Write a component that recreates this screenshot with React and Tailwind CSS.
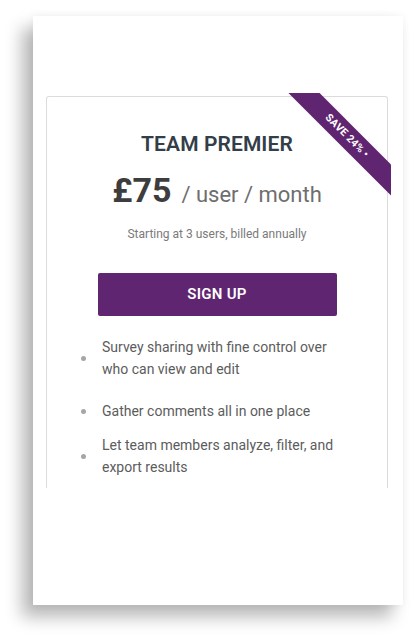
const features = [
  { text: "Survey sharing with fine control over who can view and edit", gap: "mt-[20px]" },
  { text: "Gather comments all in one place", gap: "mt-[20px]" },
  { text: "Let team members analyze, filter, and export results", gap: "mt-[12px]" },
];

const App = () => {
  return (
    <div className="min-h-[638px] bg-white pt-4 pl-[33px] font-['Roboto',_'Liberation_Sans',_sans-serif]">
      <div className="w-[370px] h-[589px] bg-white pt-20 shadow-[-11px_12px_16px_rgba(0,0,0,0.28),0_0_8px_rgba(0,0,0,0.06)]">
        <div className="relative ml-[13px] w-[342px] h-[392px] border border-b-0 border-[#dcdcdc] rounded-t-[3px]">
          {/* corner ribbon */}
          <div className="absolute -top-1 -right-1 w-[103px] h-[103px] overflow-hidden">
            <div className="absolute left-[-21px] top-[32px] w-[160px] h-[22px] rotate-45 bg-[#5f2570] flex items-center justify-center">
              <span className="text-[10.5px] font-bold text-white tracking-[0.2px]">SAVE 24% •</span>
            </div>
          </div>

          <div className="flex flex-col items-center pt-[33px]">
            <h2 className="text-[21px] leading-7 font-semibold text-[#333e48] tracking-[0.1px]">TEAM PREMIER</h2>
            <div className="mt-[12px] flex items-baseline gap-[10px] leading-10">
              <span className="text-[34px] font-bold text-[#3d3d3d]">£75</span>
              <span className="text-[22px] text-[#6e6e6e]">/ user / month</span>
            </div>
            <p className="mt-[11px] text-[12px] leading-4 text-[#7a7a7a]">Starting at 3 users, billed annually</p>
            <button className="mt-[31px] w-[239px] h-[43px] rounded-[2px] bg-[#5f2570] text-white text-[15px] font-semibold tracking-[0.3px]">
              SIGN UP
            </button>
          </div>

          <ul className="pl-[34px] pr-[40px]">
            {features.map((f) => (
              <li key={f.text} className={`flex items-center ${f.gap}`}>
                <span className="w-[5px] h-[5px] rounded-full bg-[#a3a7ab] shrink-0" />
                <span className="ml-[16px] text-[14px] leading-[22px] text-[#5c5c5c]">{f.text}</span>
              </li>
            ))}
          </ul>
        </div>
      </div>
    </div>
  );
};

export default App;
